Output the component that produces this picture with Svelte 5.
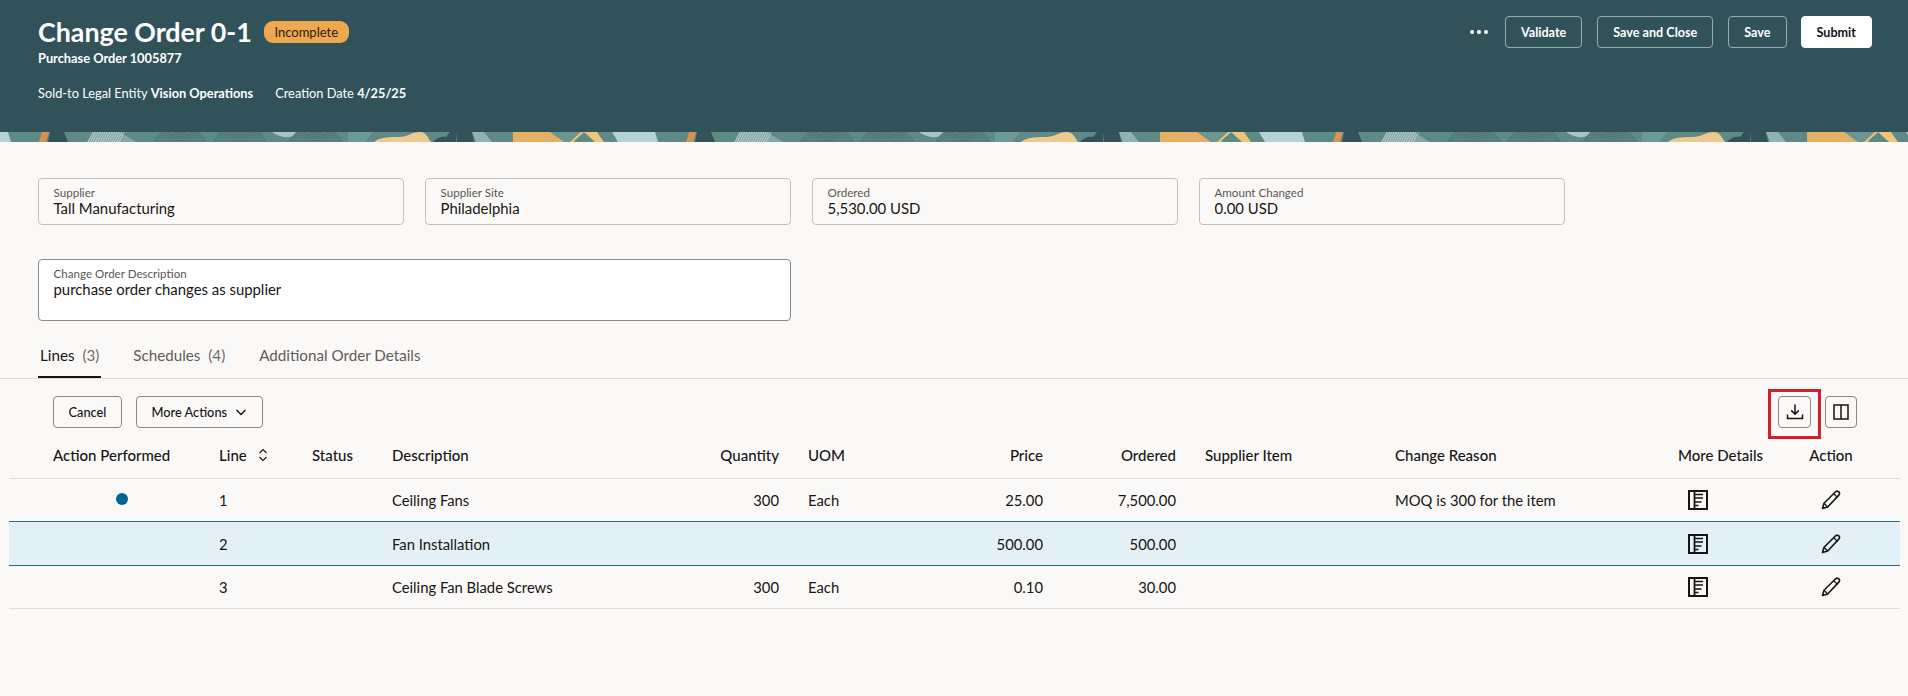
<script lang="ts">
  const fields = [
    { label: 'Supplier', value: 'Tall Manufacturing' },
    { label: 'Supplier Site', value: 'Philadelphia' },
    { label: 'Ordered', value: '5,530.00 USD' },
    { label: 'Amount Changed', value: '0.00 USD' }
  ]

  const lines = [
    { performed: true, line: 1, description: 'Ceiling Fans', quantity: '300', uom: 'Each', price: '25.00', ordered: '7,500.00', reason: 'MOQ is 300 for the item' },
    { performed: false, line: 2, description: 'Fan Installation', quantity: '', uom: '', price: '500.00', ordered: '500.00', reason: '', selected: true },
    { performed: false, line: 3, description: 'Ceiling Fan Blade Screws', quantity: '300', uom: 'Each', price: '0.10', ordered: '30.00', reason: '' }
  ]

  // the banner artwork repeats every 647px
  const tiles = [0, 647, 1294]
  const rings = [10, 12, 14, 16, 18, 20, 22, 24, 26, 28, 30]
  const ringCentres = [180, 240, 316]
  const hatch = Array.from({ length: 14 }, (_, i) => 88 + i * 2.4)
</script>

<div class="page">
  <header class="hero">
    <div class="hero-main">
      <div class="hero-text">
        <div class="title-row">
          <h1>Change Order 0-1</h1>
          <span class="badge">Incomplete</span>
        </div>
        <div class="subtitle">Purchase Order 1005877</div>
        <div class="meta">
          <span>Sold-to Legal Entity <strong>Vision Operations</strong></span>
          <span>Creation Date <strong>4/25/25</strong></span>
        </div>
      </div>
      <div class="hero-actions">
        <button type="button" class="dots" aria-label="More"><i></i><i></i><i></i></button>
        <button type="button" class="ghost">Validate</button>
        <button type="button" class="ghost">Save and Close</button>
        <button type="button" class="ghost">Save</button>
        <button type="button" class="solid">Submit</button>
      </div>
    </div>
    <svg class="strip" viewBox="0 0 1908 10" aria-hidden="true">
      <rect width="1908" height="10" fill="#5e8985" />
      {#each tiles as x}
        <g transform="translate({x} 0)">
          <path d="M0 0h8l3 10H0z" fill="#b5d2d4" />
          <path d="M39 10l3-10h7l-3 10z" fill="#dd8f52" />
          <path d="M48 10l2-10h14l4 10z" fill="#335259" />
          <path d="M87 10l6-10h27l16 10z" fill="#83a7a5" />
          {#each hatch as h}
            <path d="M{h} 10l5-10" stroke="#dbe6e3" stroke-width="0.6" />
          {/each}
          {#each ringCentres as c}
            {#each rings as r}
              <circle cx={c} cy="24" r={r} fill="none" stroke="#35595c" stroke-width="0.7" opacity="0.75" />
            {/each}
          {/each}
          <path d="M272 0h24c-3 5-8 6-12 5-4-1-8-2-12-5z" fill="#a3c5c3" />
          <path d="M348 0h25l-8 10h-17z" fill="#6f9995" />
          <path d="M374 10c4-4 12-5 24-5 10 0 14-5 22-5 6 0 8 6 11 10z" fill="#ecc98f" />
          <path d="M433 10c3-4 9-6 13-5l4-5h7l-1 10z" fill="#33535a" />
          <path d="M457 0h15l2 10h-17z" fill="#335259" />
          <path d="M472 0h12l8 10h-16z" fill="#8fb3b3" />
          <path d="M513 0h37l26 10h-63z" fill="#e6b064" />
          <path d="M550 0h36l-16 10h-6z" fill="#6b9692" />
          <path d="M570 10l11-10h3l-11 10zM584 0h13l7 10h-9z" fill="#edc678" />
          <path d="M612 0h35v10h-29z" fill="#b5d2d4" />
        </g>
      {/each}
    </svg>
  </header>

  <section class="summary">
    <div class="field-row">
      {#each fields as f}
        <div class="field">
          <span class="field-label">{f.label}</span>
          <span class="field-value">{f.value}</span>
        </div>
      {/each}
    </div>
    <div class="field desc">
      <span class="field-label">Change Order Description</span>
      <span class="field-value">purchase order changes as supplier</span>
    </div>
  </section>

  <nav class="tabs">
    <span class="tab active">Lines <em>(3)</em></span>
    <span class="tab">Schedules <em>(4)</em></span>
    <span class="tab">Additional Order Details</span>
  </nav>

  <div class="toolbar">
    <div class="toolbar-left">
      <button type="button" class="btn">Cancel</button>
      <button type="button" class="btn more">
        More Actions
        <svg width="12" height="12" viewBox="0 0 12 12" aria-hidden="true"><path d="M1.500 4l4.500 4.500L10.500 4" fill="none" stroke="#161513" stroke-width="1.500" /></svg>
      </button>
    </div>
    <div class="toolbar-right">
      <span class="highlight">
        <button type="button" class="btn icon" aria-label="Export">
          <svg width="18" height="18" viewBox="0 0 18 18" aria-hidden="true">
            <path d="M9 1.500v9.500M5.200 7.400L9 11.200l3.800-3.800M1.500 11.500v4h15v-4" fill="none" stroke="#161513" stroke-width="1.500" />
          </svg>
        </button>
      </span>
      <button type="button" class="btn icon" aria-label="Columns">
        <svg width="16" height="16" viewBox="0 0 16 16" aria-hidden="true">
          <path d="M1 1h14v14H1zM8 1v14" fill="none" stroke="#161513" stroke-width="1.500" />
        </svg>
      </button>
    </div>
  </div>

  <div class="table">
    <div class="row head">
      <div>Action Performed</div>
      <div class="sort">
        Line
        <svg width="10" height="14" viewBox="0 0 10 14" aria-hidden="true"><path d="M1.500 5L5 1.500 8.500 5M1.500 9L5 12.500 8.500 9" fill="none" stroke="#161513" stroke-width="1.100" /></svg>
      </div>
      <div>Status</div>
      <div>Description</div>
      <div class="end">Quantity</div>
      <div>UOM</div>
      <div class="end">Price</div>
      <div class="end">Ordered</div>
      <div>Supplier Item</div>
      <div>Change Reason</div>
      <div>More Details</div>
      <div class="center">Action</div>
    </div>
    {#each lines as l}
      <div class="row" class:selected={l.selected}>
        <div>{#if l.performed}<span class="dot"></span>{/if}</div>
        <div>{l.line}</div>
        <div></div>
        <div>{l.description}</div>
        <div class="end">{l.quantity}</div>
        <div>{l.uom}</div>
        <div class="end">{l.price}</div>
        <div class="end">{l.ordered}</div>
        <div></div>
        <div>{l.reason}</div>
        <div class="details">
          <svg width="20" height="20" viewBox="0 0 20 20" aria-hidden="true">
            <path d="M1 1h18v18H1z" fill="none" stroke="#161513" stroke-width="2" />
            <path d="M6.500 1v18" stroke="#161513" stroke-width="1.800" />
            <path d="M6.500 4.500H15M6.500 8H15M6.500 12H13.500M6.500 15.500H10.500" fill="none" stroke="#161513" stroke-width="1.700" />
          </svg>
        </div>
        <div class="center">
          <svg width="20" height="20" viewBox="0 0 20 20" aria-hidden="true">
            <path d="M1.500 18.500L3 13.300 14.600 1.800c1-.9 2.400-.8 3.200.1s.9 2.300 0 3.200L6.700 17z" fill="none" stroke="#161513" stroke-width="1.600" stroke-linejoin="round" />
            <path d="M3 13.300L6.700 17M12.700 3.700l3.700 3.700" fill="none" stroke="#161513" stroke-width="1.300" />
          </svg>
        </div>
      </div>
    {/each}
  </div>
</div>

<style>
  :global(body) {
    margin: 0;
    background: #fbf9f8;
  }

  .page {
    min-height: 696px;
    background: #fbf9f8;
    color: #161513;
    font-family: Lato, "Open Sans", sans-serif;
    font-size: 14px;
  }

  button {
    font-family: inherit;
    cursor: pointer;
  }

  .hero {
    background: #325259;
    color: #fff;
  }

  .hero-main {
    height: 132px;
    box-sizing: border-box;
    padding: 16px 36px 0 38px;
    display: flex;
    justify-content: space-between;
    align-items: flex-start;
  }

  .title-row {
    display: flex;
    align-items: center;
    gap: 12px;
    height: 32px;
  }

  h1 {
    margin: 0;
    font-size: 26.8px;
    font-weight: 700;
    line-height: 32px;
  }

  .badge {
    background: #eea94f;
    color: #2b1c0a;
    border-radius: 9px;
    height: 22px;
    line-height: 22px;
    padding: 0 10.5px;
    font-size: 13px;
  }

  .subtitle {
    font-size: 12.8px;
    font-weight: 700;
    line-height: 18px;
    margin-top: 1px;
  }

  .meta {
    display: flex;
    gap: 22px;
    margin-top: 17px;
    font-size: 12.8px;
    line-height: 18px;
  }

  .meta strong {
    font-weight: 700;
  }

  .hero-actions {
    display: flex;
    align-items: center;
    gap: 15px;
  }

  .ghost,
  .solid {
    height: 32px;
    padding: 0 15px;
    border-radius: 4px;
    font-size: 12.6px;
    font-weight: 700;
  }

  .ghost {
    background: transparent;
    color: #fff;
    border: 1px solid #8fb0ae;
  }

  .solid {
    background: #fff;
    color: #161513;
    border: 1px solid #fff;
    margin-left: -1px;
  }

  .dots {
    display: flex;
    gap: 3px;
    background: none;
    border: 0;
    padding: 0;
    margin-right: 2px;
    height: 32px;
    align-items: center;
  }

  .dots i {
    display: block;
    width: 4px;
    height: 4px;
    border-radius: 50%;
    background: #fff;
  }

  .strip {
    display: block;
    width: 1908px;
    height: 10px;
  }

  .summary {
    padding: 36px 38px 0;
  }

  .field-row {
    display: flex;
    gap: 21px;
  }

  .field {
    box-sizing: border-box;
    width: 366px;
    height: 47px;
    padding: 7px 14.5px 0;
    border: 1px solid #c4c0bc;
    border-radius: 4px;
    display: flex;
    flex-direction: column;
  }

  .field-label {
    font-size: 11.6px;
    line-height: 14px;
    color: #5a5652;
  }

  .field-value {
    font-size: 14.9px;
    line-height: 17px;
  }

  .desc {
    width: 753px;
    height: 62px;
    margin-top: 34px;
    background: #fff;
    border-color: #8b8783;
  }

  .tabs {
    display: flex;
    gap: 30px;
    height: 58px;
    box-sizing: border-box;
    padding: 0 0 0 38px;
    border-bottom: 1px solid #dedbd8;
    font-size: 15.2px;
    color: #5f5b57;
  }

  .tab {
    height: 57px;
    box-sizing: border-box;
    padding: 25px 2px 0;
    line-height: 18px;
  }

  .tab.active {
    color: #161513;
    border-bottom: 2px solid #161513;
  }

  .tab em {
    font-style: normal;
    color: #6f6b67;
    margin-left: 4px;
  }

  .toolbar {
    display: flex;
    justify-content: space-between;
    align-items: center;
    padding: 17px 51px 0 53px;
  }

  .toolbar-left,
  .toolbar-right {
    display: flex;
    align-items: center;
    gap: 14px;
  }

  .btn {
    height: 32px;
    padding: 0 14.5px;
    background: transparent;
    color: #161513;
    border: 1px solid #8b8783;
    border-radius: 4px;
    font-size: 12.8px;
    font-weight: 500;
  }

  .more {
    display: flex;
    align-items: center;
    gap: 8px;
  }

  .icon {
    width: 32px;
    padding: 0;
    display: flex;
    align-items: center;
    justify-content: center;
  }

  .highlight .icon {
    width: 33px;
  }

  /* annotation box drawn over the export button */
  .highlight {
    display: block;
    position: relative;
  }

  .highlight::after {
    content: '';
    position: absolute;
    left: -10px;
    top: -7px;
    width: 47px;
    height: 44px;
    border: 3px solid #d0202a;
  }

  .table {
    margin: 8px 8px 0 9px;
  }

  .row {
    display: grid;
    grid-template-columns: 166px 93px 80px 250px 166px 92px 172px 133px 190px 283px 112px 82px;
    padding-left: 44px;
    height: 43px;
    align-items: center;
    border-bottom: 1px solid #dedbd8;
    box-sizing: border-box;
    font-size: 14.8px;
    white-space: nowrap;
  }

  .row.head {
    height: 43px;
    padding-bottom: 5px;
    font-size: 15px;
    font-weight: 500;
  }

  .row.selected {
    background: #e3f0f6;
    border-top: 1px solid #1f6f8b;
    border-bottom: 1px solid #1f6f8b;
    margin-top: -1px;
    height: 45px;
  }

  .end {
    text-align: right;
    padding-right: 29px;
  }

  .center {
    display: flex;
    justify-content: center;
    align-items: center;
  }

  .details {
    display: flex;
    align-items: center;
    padding-left: 10px;
  }

  .sort {
    display: flex;
    align-items: center;
    gap: 11px;
  }

  .dot {
    display: block;
    width: 12px;
    height: 12px;
    border-radius: 50%;
    background: #04668f;
    margin: -3px 0 0 63px;
  }
</style>
